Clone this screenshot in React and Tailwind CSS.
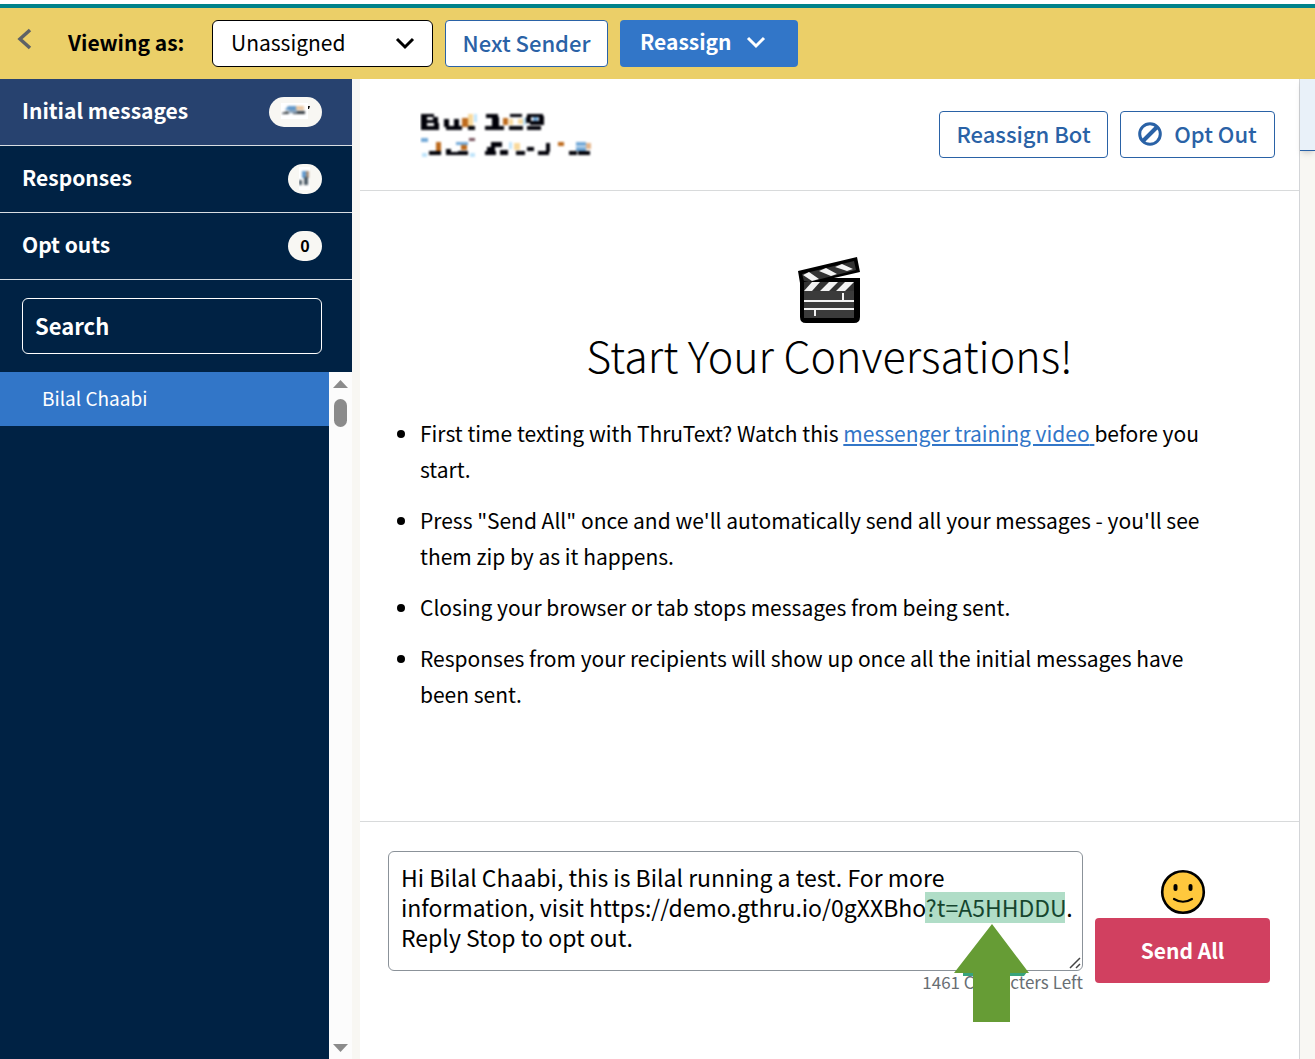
import { useState } from 'react'

const tabs = [
  { id: 'initial', label: 'Initial messages', hidden: 'wide' },
  { id: 'responses', label: 'Responses', hidden: 'narrow' },
  { id: 'optouts', label: 'Opt outs', count: 0 },
]

const outlineButton =
  'flex h-[47px] items-center justify-center rounded border border-[#2a62a6] bg-white pb-0.5 text-[22px] font-medium text-[#2a62a6]'

const Chevron = ({ className }) => (
  <svg viewBox="0 0 20 14" className={className} fill="none" stroke="currentColor" strokeWidth="3" aria-hidden="true">
    <path d="M2 3l8 8 8-8" />
  </svg>
)

// Obscured counts
const HiddenCount = ({ wide }) =>
  wide ? (
    <svg width="29" height="16" viewBox="0 0 29 16" aria-hidden="true">
      <path fill="#fff" d="M0 0h27v16H0z" />
      <g style={{ filter: 'blur(1px)' }}>
        <path fill="#6298ca" d="M7 3h8v4H4z" />
        <path fill="#e9c6a0" d="M15 3h8v4h-8z" />
        <path fill="#333a40" d="M1 10l6-2 1 3H1zM12 8h12v3H12z" />
        <path fill="#8aa4bd" d="M8 7h8v3H8z" />
      </g>
      <path fill="#111" d="M27 3h2l-1 3h-1z" />
    </svg>
  ) : (
    <svg width="12" height="24" viewBox="0 0 12 24" aria-hidden="true">
      <path fill="#fff" d="M0 1h11v23H0z" />
      <g style={{ filter: 'blur(1px)' }}>
        <path fill="#629bd0" d="M3 5h4v7H3z" />
        <path fill="#a68d78" d="M7 5h3v7H7z" />
        <path fill="#4c5b68" d="M0 14h3v5H0zM5 11h4v8H5z" />
      </g>
    </svg>
  )

// Obscured sender name and phone number
const HiddenSender = () => (
  <svg width="180" height="52" viewBox="0 0 180 52" role="img" aria-label="Hidden sender">
    <g style={{ filter: 'blur(1px)' }}>
      <g fill="#000008">
        <path d="M1 5h13v3H1zM1 8h6v10H1zM1 11h17v3H1zM1 17h18v4H1zM13 8h5v3h-5zM14 14h5v4h-5z" />
        <path d="M24 10h5v8h-5zM34 10h5v8h-5zM26 17h16v4H26zM48 17h7v4h-7z" />
        <path d="M66 5h12v4H66zM72 8h7v11h-7zM65 17h19v4H65zM90 5h12v3H90zM89 17h14v4H89zM107 5h16v3h-16zM106 8h5v6h-5zM110 12h14v4h-14zM119 7h5v9h-5zM107 17h14v4h-14z" />
        <path d="M9 42h12v4H9zM26 40h5v6h-5zM31 43h7v3h-7zM38 42h10v4H38zM71 33h11v5H71zM67 38h8v4h-8zM65 42h11v4H65zM80 41h8v5h-8zM96 42h9v4h-9zM107 38h7v4h-7zM118 42h11v4h-11zM126 34h4v9h-4zM149 42h8v4h-8zM158 42h12v4h-12z" />
      </g>
      <g fill="#bd6a1c">
        <path d="M16 33h5v9h-5zM42 9h6v9h-6zM83 9h5v7h-5zM138 33h6v4h-6zM41 36h6v5h-6z" />
      </g>
      <g fill="#f9d99c">
        <path d="M48 5h5v12h-5zM89 10h4v6h-4zM98 10h5v5h-5zM94 34h6v7h-6z" />
      </g>
      <g fill="#73a9d8">
        <path d="M1 29h7v4H1zM36 33h12v3H36zM156 33h10v4h-10zM156 38h10v4h-10zM113 8h5v4h-5z" />
      </g>
      <g fill="#bfe4fb">
        <path d="M54 5h3v8h-3zM103 9h3v7h-3zM2 44h5v4H2zM89 33h3v7h-3zM50 44h5v4h-5z" />
      </g>
      <path fill="#e4b58b" d="M166 34h5v6h-5z" />
      <path fill="#77525d" d="M49 29h6v3h-6z" />
    </g>
  </svg>
)

const Clapper = () => (
  <svg width="66" height="68" viewBox="0 0 66 68" className="mx-auto" aria-hidden="true">
    <path fill="#000" d="M1 15L60 1l3 15-26 6h26v39q0 6-6 6H9q-6 0-6-6V27z" />
    <path fill="#333" d="M5 18L57 5l2 9L12 26 7 25z" />
    <path fill="#333" d="M7 26h50v9H7z" />
    <path fill="#3b3b3b" d="M7 35h50v27H7z" />
    <path fill="#f3f3f3" d="M6 19l6-3 10 7-7 2zM22 15l7-3 11 6-6 2zM38 11l7-3 11 5-6 2z" />
    <path fill="#f3f3f3" d="M15 26h8l-8 9H7zM32 26h9l-9 9h-9zM48 26h9l-9 9h-9z" />
    <path fill="#f3f3f3" d="M7 44h50v2H7zM7 52h50v2H7zM45 37h2v7h-2zM17 54h2v6h-2z" />
  </svg>
)

const Smiley = () => (
  <svg width="46" height="46" viewBox="0 0 46 46" aria-hidden="true">
    <circle cx="23" cy="23" r="20.8" fill="#ffc83d" stroke="#000" strokeWidth="2.6" />
    <rect x="13.5" y="15" width="4" height="7" rx="2" />
    <rect x="28.5" y="15" width="4" height="7" rx="2" />
    <path d="M14 30q9 5.500 18 0" fill="none" stroke="#000" strokeWidth="2.2" strokeLinecap="round" />
  </svg>
)

const TopBar = () => (
  <header className="mt-1 flex h-[75px] shrink-0 items-center border-t-4 border-[#00828a] bg-[#ebcf68]">
    <button aria-label="Back" className="mb-2.5 ml-[15px] text-[#5d6266]">
      <svg width="18" height="24" viewBox="0 0 18 24" fill="none" stroke="currentColor" strokeWidth="3.5">
        <path d="M15 3l-10 9 10 9" />
      </svg>
    </button>
    <label htmlFor="sender" className="ml-[35px] w-[120px] whitespace-nowrap pb-0.5 text-[21px] font-bold">
      Viewing as:
    </label>
    <div className="relative ml-6 w-[221px]">
      <select
        id="sender"
        className="block h-[47px] w-full appearance-none rounded-md border border-black bg-white pb-0.5 pl-[18px] text-[21px]"
      >
        <option>Unassigned</option>
      </select>
      <Chevron className="pointer-events-none absolute right-[18px] top-4 h-[14px] w-5" />
    </div>
    <button className={`ml-3 w-[163px] whitespace-nowrap ${outlineButton}`}>Next Sender</button>
    <button className="ml-3 flex h-[47px] w-[178px] items-center gap-3.5 rounded bg-[#3276c8] pb-1 pl-5 text-[21px] font-bold text-white">
      Reassign
      <Chevron className="h-[14px] w-5" />
    </button>
  </header>
)

const Sidebar = ({ active, onSelect }) => (
  <aside className="flex w-[352px] shrink-0 flex-col bg-[#002244] text-white">
    <nav>
      {tabs.map((tab) => (
        <button
          key={tab.id}
          onClick={() => onSelect(tab.id)}
          className={`flex h-[67px] w-full items-center justify-between border-b border-[#d8dde2] pl-[22px] pr-[30px] text-[21px] font-bold ${
            active === tab.id ? 'bg-[#27426f]' : ''
          }`}
        >
          <span className="pb-0.5">{tab.label}</span>
          <span
            className={`flex h-[30px] items-center justify-center rounded-full bg-[#f8f7f3] pb-0.5 text-base font-bold text-black ${
              tab.hidden === 'wide' ? 'w-[53px]' : 'w-[34px]'
            }`}
          >
            {tab.hidden ? <HiddenCount wide={tab.hidden === 'wide'} /> : tab.count}
          </span>
        </button>
      ))}
    </nav>
    <div className="py-[18px] pl-[22px] pr-[30px]">
      <input
        type="search"
        aria-label="Search"
        placeholder="Search"
        className="block h-14 w-full rounded-md border border-white bg-transparent px-3 pb-0.5 text-[22px] font-bold placeholder:text-white"
      />
    </div>
    <div className="flex flex-1">
      <div className="flex-1">
        <button className="h-[54px] w-full bg-[#3276c8] pb-0.5 pl-[42px] text-left text-[19px]">Bilal Chaabi</button>
      </div>
      <div className="flex w-[23px] flex-col items-center bg-[#fcfcfc] pb-[7px] pt-2 text-[#8b8b8b]">
        <svg width="15" height="8" viewBox="0 0 15 8" fill="currentColor" aria-hidden="true">
          <path d="M0 8L7.5 0 15 8z" />
        </svg>
        <div className="mt-[11px] h-7 w-[13px] rounded-full bg-[#8b8b8b]" />
        <svg width="15" height="8" viewBox="0 0 15 8" className="mt-auto" fill="currentColor" aria-hidden="true">
          <path d="M0 0h15L7.5 8z" />
        </svg>
      </div>
    </div>
  </aside>
)

const Intro = () => (
  <section className="flex-1 px-[60px] pt-[65px]">
    <Clapper />
    <h1 className="text-center text-[43px] font-light leading-[60px]">Start Your Conversations!</h1>
    <ul className="mt-[31px] list-disc space-y-[15px] pr-4 text-[21px] leading-9">
      <li>
        First time texting with ThruText? Watch this{' '}
        <a href="#training" className="text-[#3276c8] underline">
          messenger training video{' '}
        </a>
        before you start.
      </li>
      <li>Press "Send All" once and we'll automatically send all your messages - you'll see them zip by as it happens.</li>
      <li>Closing your browser or tab stops messages from being sent.</li>
      <li>Responses from your recipients will show up once all the initial messages have been sent.</li>
    </ul>
  </section>
)

const Composer = () => {
  const [message, setMessage] = useState(
    'Hi Bilal Chaabi, this is Bilal running a test. For more information, visit https://demo.gthru.io/0gXXBho?t=A5HHDDU. Reply Stop to opt out.'
  )

  return (
    <section className="flex h-[238px] shrink-0 gap-3 border-t border-[#d8dadb] pl-7 pr-[29px] pt-[29px]">
      <div className="relative flex-1">
        <textarea
          aria-label="Message"
          value={message}
          onChange={(e) => setMessage(e.target.value)}
          className="block h-[120px] w-full resize-none overflow-hidden rounded-md border border-[#8b9299] pb-3 pl-3 pr-1 pt-2.5 text-[23px] leading-[30px]"
        />
        <p className="text-right text-[17px] leading-[22px] text-[#686e73]">1461 Characters Left</p>
        {/* Highlighted link suffix and the arrow pointing at it */}
        <div className="absolute right-[18px] top-[41px] h-[31px] w-[140px] bg-[#3aa974]/40" />
        <svg
          width="12"
          height="12"
          viewBox="0 0 12 12"
          className="pointer-events-none absolute right-[2px] top-[106px]"
          fill="none"
          stroke="#444"
          strokeWidth="1.5"
          aria-hidden="true"
        >
          <path d="M1 11L11 1M7 11l4-4" />
        </svg>
        <svg width="76" height="98" viewBox="0 0 76 98" className="absolute right-[53px] top-[73px]" aria-hidden="true">
          <path fill="#38a37c" d="M9 48h64l-3 4H9z" />
          <path fill="#669c35" d="M38 0l37 49H56v49H19V49H0z" />
        </svg>
      </div>
      <div className="flex w-[175px] flex-col items-center pt-[18px]">
        <button aria-label="Insert emoji">
          <Smiley />
        </button>
        <button className="mt-[3px] h-[65px] w-full rounded bg-[#d14060] text-[21px] font-bold text-white">Send All</button>
      </div>
    </section>
  )
}

const App = () => {
  const [active, setActive] = useState('initial')

  return (
    <div className="flex h-screen flex-col bg-white font-['Noto_Sans_CJK_SC',sans-serif] text-black">
      <TopBar />
      <div className="flex min-h-0 flex-1 bg-[#f8f7f3]">
        <Sidebar active={active} onSelect={setActive} />
        <main className="ml-2 flex flex-1 flex-col border-r border-[#d3d5d8] bg-white">
          <div className="flex h-28 shrink-0 items-center gap-3 border-b border-[#d8dadb] pl-[60px] pr-6">
            <div className="mr-auto">
              <HiddenSender />
            </div>
            <button className={`w-[169px] whitespace-nowrap ${outlineButton}`}>Reassign Bot</button>
            <button className={`w-[155px] gap-3 whitespace-nowrap ${outlineButton}`}>
              <svg width="24" height="24" viewBox="0 0 24 24" fill="none" stroke="currentColor" strokeWidth="3" aria-hidden="true">
                <circle cx="12" cy="12" r="10.3" />
                <path d="M5 19L19 5" strokeWidth="4" />
              </svg>
              Opt Out
            </button>
          </div>
          <Intro />
          <Composer />
        </main>
        <div className="h-[72px] w-[15px] border-b border-[#2a62a6] bg-[#e9f1f9] shadow-md" />
      </div>
    </div>
  )
}

export default App
